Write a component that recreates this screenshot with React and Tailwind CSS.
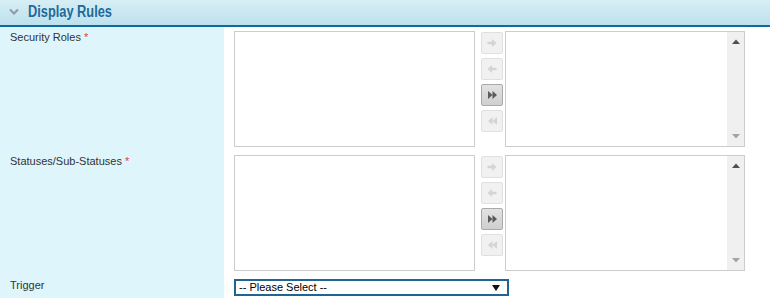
import React from 'react';

const ChevronDown = () => (
    <svg width="10" height="7" viewBox="0 0 10 7" className="mr-[9px]">
        <path d="M1 1.5 L5 5.5 L9 1.5" fill="none" stroke="#8c9ba5" strokeWidth="2" />
    </svg>
);

// small transfer button icons
const MoveIcon = ({ type, color }) => {
    if (type === 'right') {
        return (
            <svg width="10" height="10" viewBox="0 0 10 10">
                <path d="M0.5 3.8 H5 V1 L9.5 5 L5 9 V6.2 H0.5 Z" fill={color} />
            </svg>
        );
    }
    if (type === 'left') {
        return (
            <svg width="10" height="10" viewBox="0 0 10 10">
                <path d="M9.5 3.8 H5 V1 L0.5 5 L5 9 V6.2 H9.5 Z" fill={color} />
            </svg>
        );
    }
    if (type === 'allRight') {
        return (
            <svg width="11" height="10" viewBox="0 0 11 10">
                <path d="M1 1 L5.5 5 L1 9 Z M5.5 1 L10 5 L5.5 9 Z" fill={color} />
            </svg>
        );
    }
    return (
        <svg width="11" height="10" viewBox="0 0 11 10">
            <path d="M10 1 L5.5 5 L10 9 Z M5.5 1 L1 5 L5.5 9 Z" fill={color} />
        </svg>
    );
};

const TransferButton = ({ type, active }) => (
    <button
        className={
            active
                ? 'w-[22px] h-[22px] flex items-center justify-center rounded-[2px] border border-[#a9a9a9] bg-gradient-to-b from-[#e2e2e2] to-[#cfcfcf]'
                : 'w-[22px] h-[22px] flex items-center justify-center rounded-[2px] border border-[#e0e0e0] bg-[#f1f1f1]'
        }
    >
        <MoveIcon type={type} color={active ? '#5a5a5a' : '#d4d4d4'} />
    </button>
);

const DualList = () => (
    <div className="flex items-start">
        <div className="w-[241px] h-[116px] border border-[#cccccc] bg-white"></div>
        <div className="flex flex-col gap-[4px] ml-[6px] mr-[2px] pt-[1px]">
            <TransferButton type="right" />
            <TransferButton type="left" />
            <TransferButton type="allRight" active />
            <TransferButton type="allLeft" />
        </div>
        <div className="w-[240px] h-[116px] border border-[#cccccc] bg-white flex justify-end">
            <div className="w-[17px] h-full bg-[#f0f0f0] flex flex-col items-center justify-between pt-[7px] pb-[7px]">
                <svg width="8" height="5" viewBox="0 0 8 5">
                    <path d="M0 5 L4 0.5 L8 5 Z" fill="#505050" />
                </svg>
                <svg width="8" height="5" viewBox="0 0 8 5">
                    <path d="M0 0 L4 4.5 L8 0 Z" fill="#a3a3a3" />
                </svg>
            </div>
        </div>
    </div>
);

const Label = ({ text, required }) => (
    <div className="bg-[#def6fb] pl-[10px] pt-[3px] text-[11px] leading-[14px] text-[#333333]">
        {text}
        {required && <span className="text-[#e8383d]"> *</span>}
    </div>
);

const App = () => {
    return (
        <div className="w-[770px] h-[298px] overflow-hidden bg-white font-['Liberation_Sans',Arial,sans-serif]">
            {/* panel header */}
            <div className="h-[27px] flex items-center pl-[9px] pb-[2px] border-b-2 border-[#0e6aa3] bg-gradient-to-b from-[#d7eef5] to-[#bde1ec]">
                <ChevronDown />
                <span className="inline-block origin-left scale-x-[0.8] text-[16px] leading-[18px] font-bold text-[#1d6a9b]">
                    Display Rules
                </span>
            </div>

            <div className="grid grid-cols-[224px_1fr]">
                <Label text="Security Roles" required />
                <div className="pl-[10px] pt-[4px] pb-[4px]">
                    <DualList />
                </div>

                <Label text="Statuses/Sub-Statuses" required />
                <div className="pl-[10px] pt-[4px] pb-[4px]">
                    <DualList />
                </div>

                <Label text="Trigger" />
                <div className="pl-[10px] pt-[4px] pb-[4px]">
                    <div className="w-[275px] h-[17px] border-2 border-[#1f6497] flex items-center justify-between pl-[3px] pr-[7px] text-[11px] text-black">
                        <span>-- Please Select --</span>
                        <svg width="8" height="6" viewBox="0 0 8 6">
                            <path d="M0 0 L8 0 L4 6 Z" fill="#111111" />
                        </svg>
                    </div>
                </div>
            </div>
        </div>
    );
};

export default App;
